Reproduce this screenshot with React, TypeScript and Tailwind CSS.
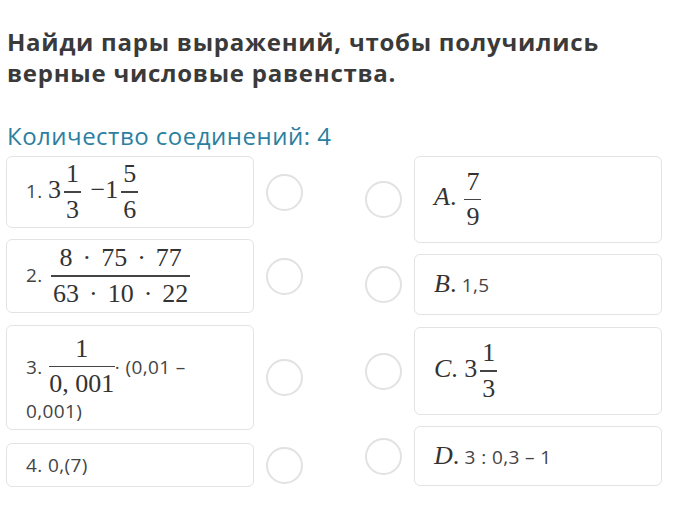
import type { ReactNode } from 'react';

// Simple stacked fraction, KaTeX-like
const Frac = ({ num, den, className }: { num: ReactNode; den: ReactNode; className?: string }) => (
  <span className={`inline-flex flex-col items-center align-middle mx-[3px] whitespace-nowrap ${className ?? ''}`}>
    <span className="leading-[26px] px-[2px]">{num}</span>
    <span className="block w-full h-[1.5px] bg-[#444] my-[4px]"></span>
    <span className="leading-[26px] px-[2px]">{den}</span>
  </span>
);

const Math = ({ children }: { children: ReactNode }) => (
  <span className="font-['Liberation_Serif',serif] text-[26px] tracking-normal text-[#333]">{children}</span>
);

const Radio = () => (
  <div className="w-[37px] h-[37px] shrink-0 rounded-full border-[2.5px] border-[#e2e2e2] bg-white" />
);

const Card = ({ children, h }: { children: ReactNode; h: string }) => (
  <div className={`w-[248px] ${h} shrink-0 rounded-[6px] border border-[#e3e3e3] bg-white px-[19px] flex items-center`}>
    <div className="text-[19px] tracking-[0.4px] text-[#444] leading-[24px]">{children}</div>
  </div>
);

const Dot = () => <span className="mx-[10px]">·</span>;

export default function App() {
  return (
    <div className="w-[693px] h-[532px] bg-white font-['Open_Sans',sans-serif] overflow-hidden">
      <div className="pl-[7px] pt-[26px]">
        <h1 className="text-[24px] font-bold tracking-[0.75px] leading-[31px] text-[#3a3a3a]">
          Найди пары выражений, чтобы получились
          <br />
          верные числовые равенства.
        </h1>
        <p className="mt-[32px] text-[24px] tracking-[0.5px] leading-[32px] text-[#2c7f9f]">Количество соединений: 4</p>
      </div>

      <div className="flex pl-[6px] mt-[4px]">
        {/* Left column */}
        <div className="flex flex-col gap-[11px]">
          <div className="flex items-center gap-[12px]">
            <Card h="h-[72px]">
              1. <Math>3<Frac num="1" den="3" /> −1<Frac num="5" den="6" /></Math>
            </Card>
            <Radio />
          </div>
          <div className="flex items-center gap-[12px]">
            <Card h="h-[74px]">
              2. <Math><Frac num={<>8<Dot />75<Dot />77</>} den={<>63<Dot />10<Dot />22</>} /></Math>
            </Card>
            <Radio />
          </div>
          <div className="flex items-center gap-[12px] mt-[1px]">
            <Card h="h-[105px]">
              <div className="flex items-center whitespace-nowrap pt-[4px]">
                <span>3.</span>
                <Math><Frac num="1" den="0, 001" className="w-[66px] ml-[6px] mr-0" /></Math>
                <span>· (0,01 –</span>
              </div>
              <div className="mt-[2px]">0,001)</div>
            </Card>
            <Radio />
          </div>
          <div className="flex items-center gap-[12px] mt-[2px]">
            <Card h="h-[44px]">4. 0,(7)</Card>
            <Radio />
          </div>
        </div>

        {/* Right column */}
        <div className="flex flex-col gap-[11px] ml-[62px]">
          <div className="flex items-center gap-[12px]">
            <Radio />
            <Card h="h-[87px]">
              <Math><i>A</i>.<Frac num="7" den="9" className="ml-[8px]" /></Math>
            </Card>
          </div>
          <div className="flex items-center gap-[12px]">
            <Radio />
            <Card h="h-[61px]">
              <Math><i>B</i>.</Math> 1,5
            </Card>
          </div>
          <div className="flex items-center gap-[12px] mt-[1px]">
            <Radio />
            <Card h="h-[88px]">
              <Math><i>C</i>. 3<Frac num="1" den="3" /></Math>
            </Card>
          </div>
          <div className="flex items-center gap-[12px]">
            <Radio />
            <Card h="h-[60px]">
              <Math><i>D</i>.</Math> 3 : 0,3 – 1
            </Card>
          </div>
        </div>
      </div>
    </div>
  );
}
